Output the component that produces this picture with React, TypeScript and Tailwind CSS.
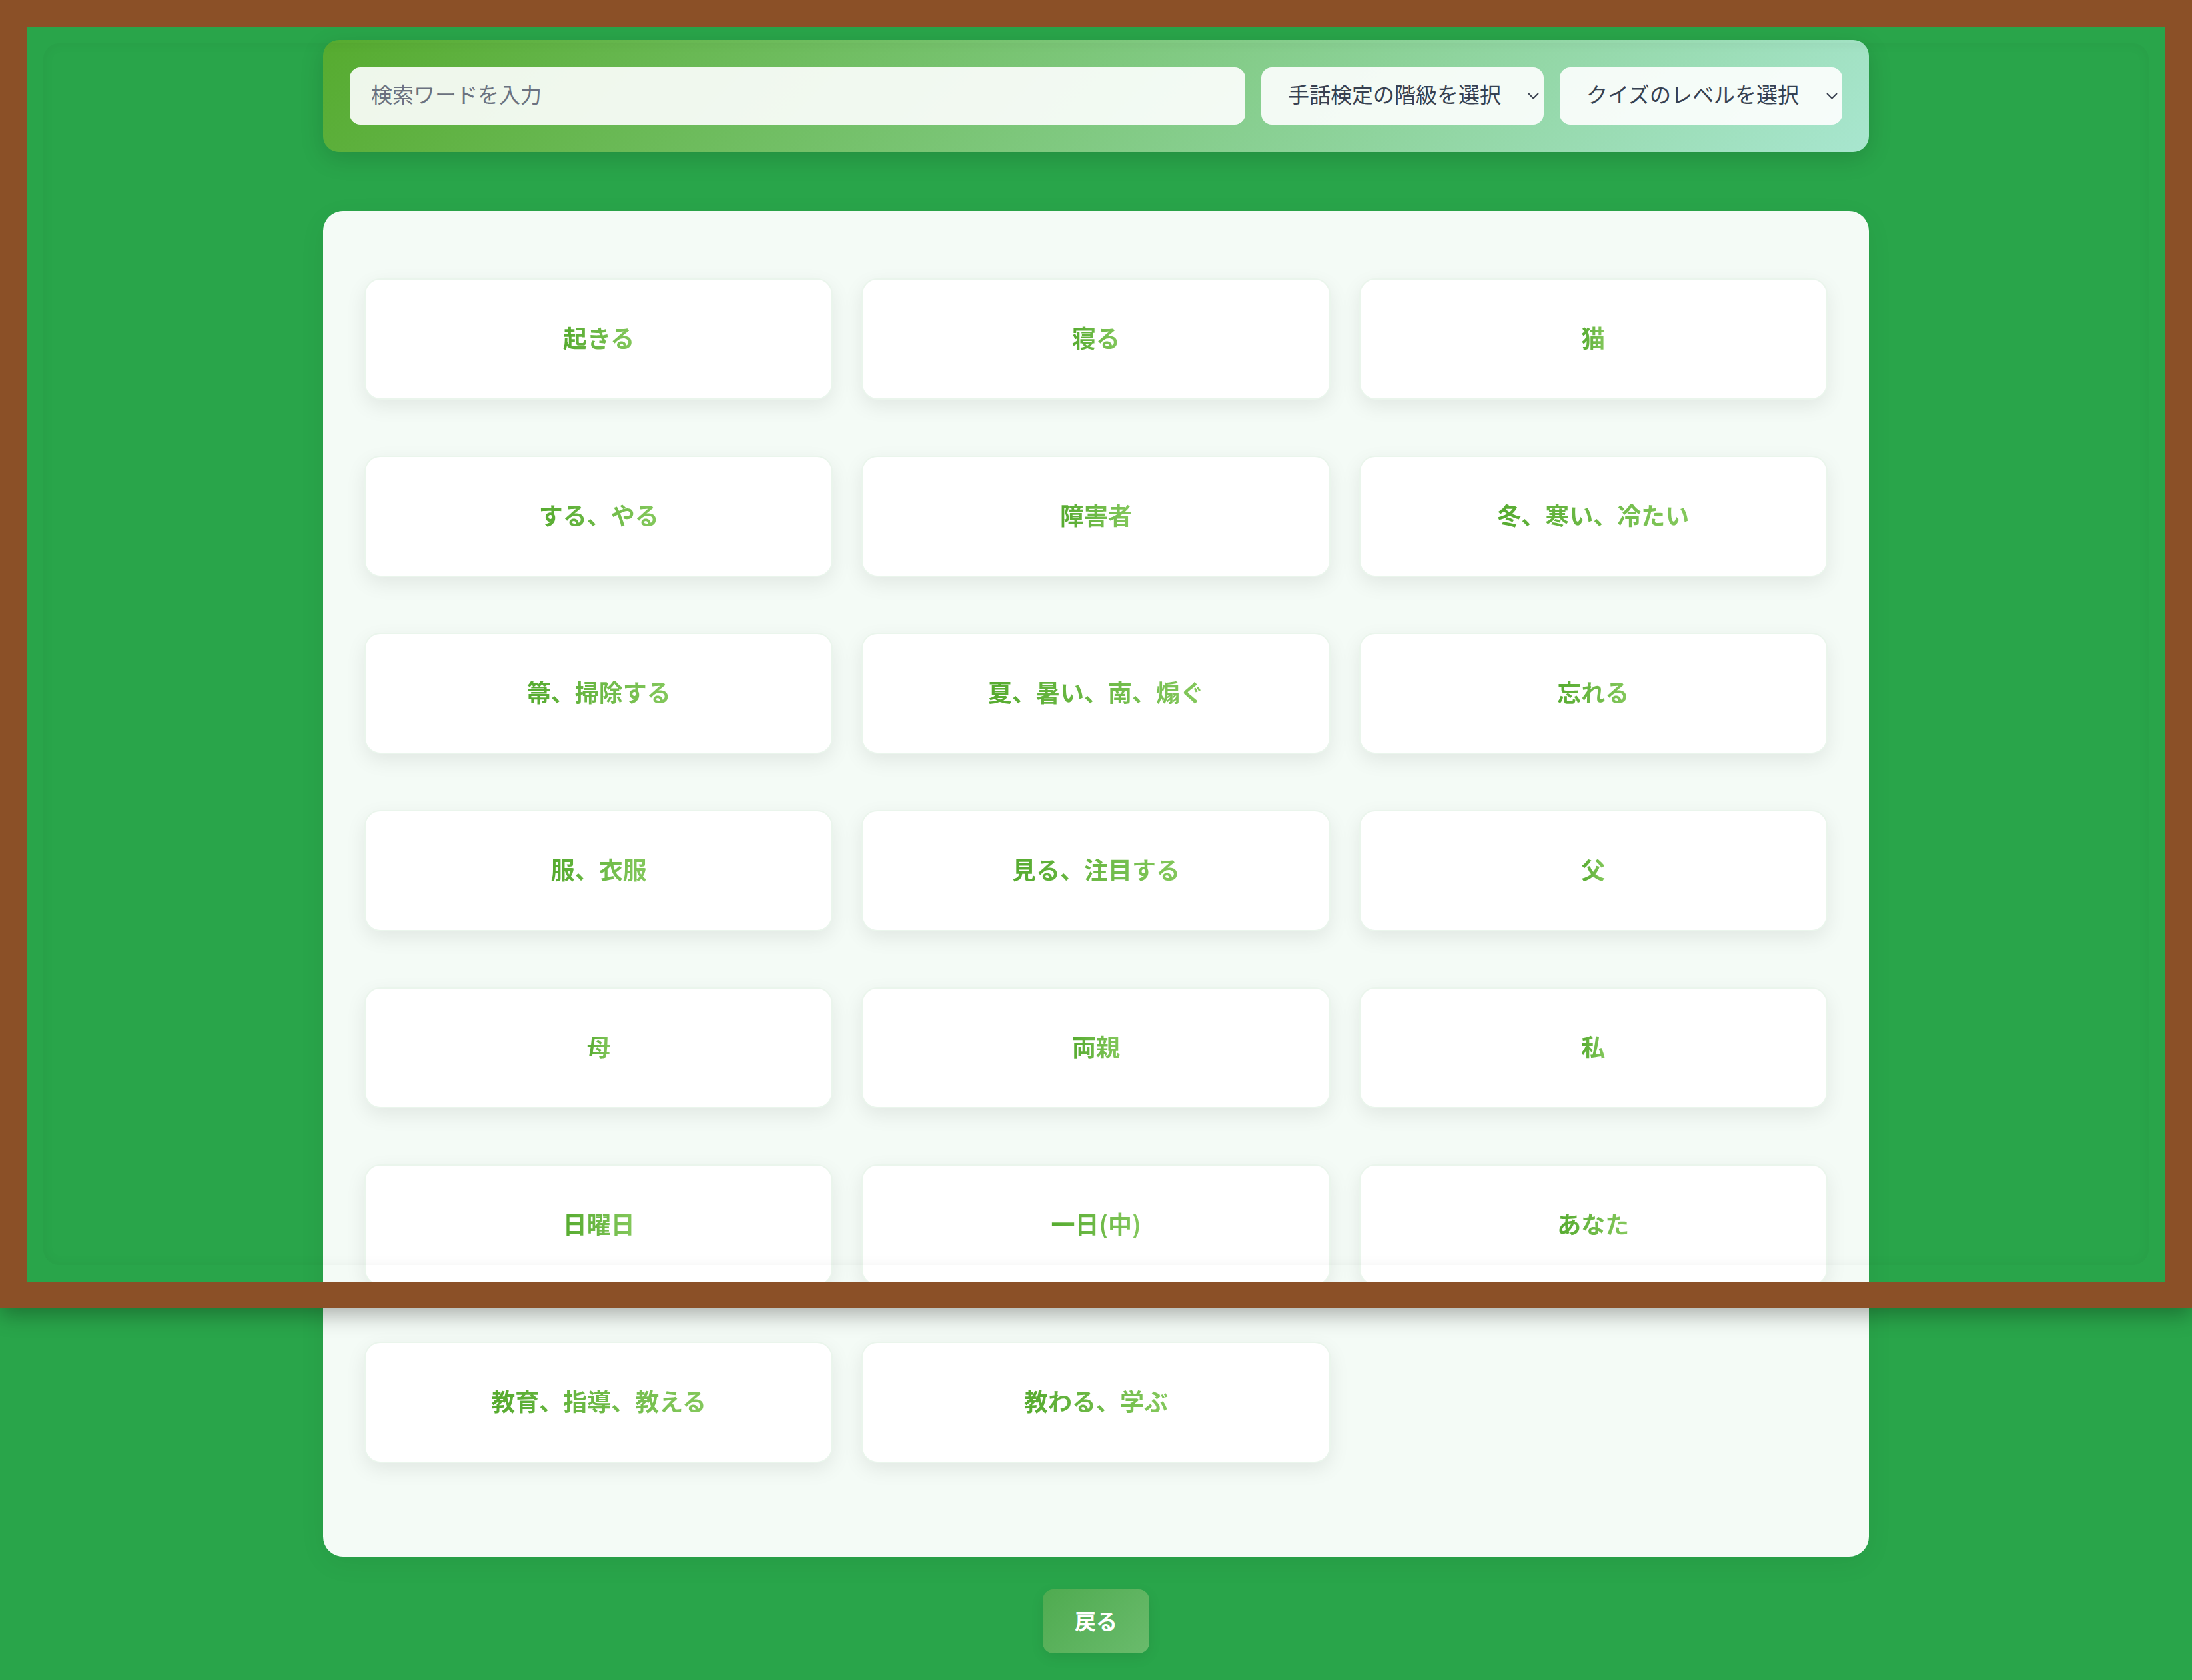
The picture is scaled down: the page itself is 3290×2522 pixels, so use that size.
import { useState } from 'react';

const words = [
  '起きる',
  '寝る',
  '猫',
  'する、やる',
  '障害者',
  '冬、寒い、冷たい',
  '箒、掃除する',
  '夏、暑い、南、煽ぐ',
  '忘れる',
  '服、衣服',
  '見る、注目する',
  '父',
  '母',
  '両親',
  '私',
  '日曜日',
  '一日(中)',
  'あなた',
  '教育、指導、教える',
  '教わる、学ぶ',
];

function Chevron() {
  return (
    <svg
      width="17"
      height="10"
      viewBox="0 0 17 10"
      className="pointer-events-none absolute right-[7px] top-1/2 -translate-y-1/2"
    >
      <polyline points="1,1 8.5,8.5 16,1" fill="none" stroke="#3a4150" strokeWidth="2" />
    </svg>
  );
}

function SelectBox({ label, options }: { label: string; options: string[] }) {
  return (
    <div className="relative w-[424px] shrink-0">
      <select
        defaultValue=""
        className="h-[86px] w-full appearance-none rounded-[16px] bg-white/90 pl-[40px] pr-[40px] pb-[8px] text-[32px] text-[#374151] outline-none"
      >
        <option value="">{label}</option>
        {options.map((o) => (
          <option key={o} value={o}>
            {o}
          </option>
        ))}
      </select>
      <Chevron />
    </div>
  );
}

export default function App() {
  const [query, setQuery] = useState('');
  const shown = words.filter((w) => w.includes(query));

  return (
    <div className="relative min-h-screen bg-[#29a54a] pt-[60px] pb-[40px] font-['Noto_Sans_CJK_JP','Noto_Sans',sans-serif]">
      {/* 検索バー */}
      <div className="mx-auto flex w-[2320px] items-center gap-[24px] rounded-[24px] bg-[linear-gradient(135deg,#56ab2f,#a8e6cf)] px-[40px] py-[41px] shadow-[0_10px_36px_rgba(0,0,0,0.14)]">
        <input
          value={query}
          onChange={(e) => setQuery(e.target.value)}
          placeholder="検索ワードを入力"
          className="h-[86px] min-w-0 flex-1 rounded-[16px] bg-white/90 px-[32px] pb-[8px] text-[32px] text-[#374151] outline-none placeholder:text-[#6b7280]"
        />
        <SelectBox label="手話検定の階級を選択" options={['1級', '2級', '3級', '4級', '5級']} />
        <SelectBox label="クイズのレベルを選択" options={['初級', '中級', '上級']} />
      </div>

      {/* 単語カード一覧 */}
      <div className="mx-auto mt-[89px] w-[2320px] rounded-[30px] bg-white/95 px-[62px] pt-[101px] pb-[141px] shadow-[0_10px_40px_rgba(0,0,0,0.06)]">
        <div className="grid grid-cols-3 gap-x-[43px] gap-y-[84px]">
          {shown.map((w) => (
            <div
              key={w}
              className="flex h-[182px] items-center justify-center rounded-[24px] border-2 border-[#eaf5ec] bg-white pb-[6px] shadow-[0_10px_30px_rgba(0,0,0,0.08)]"
            >
              <span className="bg-gradient-to-r from-[#56ab2f] to-[#84c85c] bg-clip-text text-[36px] font-bold text-transparent">
                {w}
              </span>
            </div>
          ))}
        </div>
      </div>

      <div className="mt-[49px] flex justify-center">
        <button className="h-[96px] w-[160px] rounded-[16px] bg-[linear-gradient(135deg,#4fab50,#6abb6c)] pb-[4px] text-[32px] font-bold text-white shadow-[0_6px_20px_rgba(0,0,0,0.08)]">
          戻る
        </button>
      </div>

      {/* 黒板風フレーム */}
      <div className="pointer-events-none absolute left-0 top-0 h-[1964px] w-full border-[40px] border-[#8b5027] shadow-[0_10px_30px_rgba(0,0,0,0.3)]">
        <div className="absolute inset-[25px] rounded-[24px] shadow-[inset_0_0_18px_rgba(0,0,0,0.05)]" />
      </div>
    </div>
  );
}
